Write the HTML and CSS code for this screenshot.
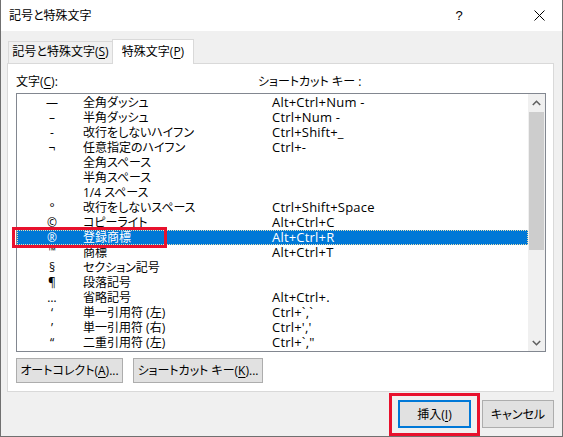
FILE: index.html
```html
<!DOCTYPE html>
<html lang="ja">
<head>
<meta charset="utf-8">
<title>記号と特殊文字</title>
<link rel="stylesheet" href="styles.css">
</head>
<body>
<div class="window">
  <div class="titlebar">
    <span class="title">記号と特殊文字</span>
    <span class="help">?</span>
    <span class="close">
      <svg width="11" height="11" viewBox="0 0 11 11"><path d="M0.5 0.5 L10.5 10.5 M10.5 0.5 L0.5 10.5" stroke="#000" stroke-width="1" fill="none"/></svg>
    </span>
  </div>
  <div class="content">
    <div class="tabs">
      <div class="tab">記号と特殊文字(<u>S</u>)</div>
      <div class="tab active">特殊文字(<u>P</u>)</div>
    </div>
    <div class="panel">
      <div class="labels">
        <span>文字(<u>C</u>):</span>
        <span>ショートカット キー :</span>
      </div>
      <div class="list">
        <div class="rows">
          <div class="row"><span class="sym">—</span><span class="name">全角ダッシュ</span><span class="key">Alt+Ctrl+Num -</span></div>
          <div class="row"><span class="sym">–</span><span class="name">半角ダッシュ</span><span class="key">Ctrl+Num -</span></div>
          <div class="row"><span class="sym">-</span><span class="name">改行をしないハイフン</span><span class="key">Ctrl+Shift+_</span></div>
          <div class="row"><span class="sym">¬</span><span class="name">任意指定のハイフン</span><span class="key">Ctrl+-</span></div>
          <div class="row"><span class="sym"></span><span class="name">全角スペース</span><span class="key"></span></div>
          <div class="row"><span class="sym"></span><span class="name">半角スペース</span><span class="key"></span></div>
          <div class="row"><span class="sym"></span><span class="name">1/4 スペース</span><span class="key"></span></div>
          <div class="row"><span class="sym">°</span><span class="name">改行をしないスペース</span><span class="key">Ctrl+Shift+Space</span></div>
          <div class="row"><span class="sym">©</span><span class="name">コピーライト</span><span class="key">Alt+Ctrl+C</span></div>
          <div class="row selected"><span class="sym">®</span><span class="name">登録商標</span><span class="key">Alt+Ctrl+R</span><span class="mark mark-row"></span></div>
          <div class="row"><span class="sym tm">™</span><span class="name">商標</span><span class="key">Alt+Ctrl+T</span></div>
          <div class="row"><span class="sym">§</span><span class="name">セクション記号</span><span class="key"></span></div>
          <div class="row"><span class="sym">¶</span><span class="name">段落記号</span><span class="key"></span></div>
          <div class="row"><span class="sym">…</span><span class="name">省略記号</span><span class="key">Alt+Ctrl+.</span></div>
          <div class="row"><span class="sym">‘</span><span class="name">単一引用符 (左)</span><span class="key">Ctrl+`,`</span></div>
          <div class="row"><span class="sym">’</span><span class="name">単一引用符 (右)</span><span class="key">Ctrl+',&#39;</span></div>
          <div class="row"><span class="sym">“</span><span class="name">二重引用符 (左)</span><span class="key">Ctrl+`,"</span></div>
        </div>
        <div class="scrollbar">
          <div class="arrow">
            <svg width="9" height="6" viewBox="0 0 9 6"><path d="M0.8 5 L4.5 1.3 L8.2 5" stroke="#606060" stroke-width="1.6" fill="none"/></svg>
          </div>
          <div class="track"><div class="thumb"></div></div>
          <div class="arrow">
            <svg width="9" height="6" viewBox="0 0 9 6"><path d="M0.8 1 L4.5 4.7 L8.2 1" stroke="#606060" stroke-width="1.6" fill="none"/></svg>
          </div>
        </div>
      </div>
      <div class="actions">
        <button class="btn btn-auto">オートコレクト(<u>A</u>)...</button>
        <button class="btn btn-key">ショートカット キー(<u>K</u>)...</button>
      </div>
    </div>
    <div class="footer">
      <button class="btn btn-insert">挿入(<u>I</u>)<span class="mark mark-btn"></span></button>
      <button class="btn btn-cancel">キャンセル</button>
    </div>
  </div>
</div>
</body>
</html>
```
FILE: styles.css
```css
* { box-sizing: border-box; }
html, body { margin: 0; padding: 0; }
body {
  width: 563px;
  height: 437px;
  overflow: hidden;
  font-family: "Open Sans", "Noto Sans CJK JP", sans-serif;
  font-size: 12px;
  font-feature-settings: "palt";
  color: #000;
  background: #fff;
}
u { text-decoration: underline; text-underline-offset: 2px; }

.window {
  width: 563px;
  height: 437px;
  border: 1px solid #707070;
  border-top: none;
  background: #f0f0f0;
  display: flex;
  flex-direction: column;
}

.titlebar {
  height: 31px;
  flex: none;
  background: #fff;
  display: flex;
  align-items: center;
}
.title { flex: 1; padding-left: 8px; line-height: 15px; }
.help {
  width: 46px;
  text-align: center;
  font-family: "Liberation Sans", sans-serif;
  font-size: 13px;
  margin-right: 34px;
}
.close {
  width: 46px;
  height: 31px;
  display: flex;
  align-items: center;
  justify-content: center;
}
.close svg { display: block; }

.content {
  flex: 1;
  padding: 8px 8px 0 6px;
  display: flex;
  flex-direction: column;
}

.tabs {
  height: 24px;
  display: flex;
  align-items: flex-end;
  padding-left: 1px;
  position: relative;
  z-index: 2;
}
.tab {
  height: 22px;
  width: 105px;
  border: 1px solid #d9d9d9;
  border-bottom: none;
  background: #f0f0f0;
  line-height: 20px;
  text-align: center;
}
.tab.active {
  width: 82px;
  height: 25px;
  margin-left: -1px;
  margin-bottom: -1px;
  background: #fff;
  line-height: 24px;
  padding-bottom: 2px;
}

.panel {
  width: 547px;
  height: 329px;
  flex: none;
  background: #fff;
  border: 1px solid #d9d9d9;
  padding: 10px 0 0 8px;
}

.labels {
  display: grid;
  grid-template-columns: 242px 1fr;
  line-height: 15px;
  height: 15px;
}

.list {
  margin-top: 4px;
  width: 530px;
  height: 259px;
  border: 1px solid #828790;
  background: #fff;
  display: flex;
}
.rows { flex: 1; padding-top: 1px; }
.row {
  height: 15px;
  line-height: 15px;
  display: grid;
  grid-template-columns: 66px 189px 1fr;
  white-space: nowrap;
  position: relative;
}
.sym { padding-left: 4px; text-align: center; }
.sym.tm { font-size: 10px; line-height: 11px; }
.key { font-size: 13px; letter-spacing: 0.2px; }
.row.selected {
  background: #0078d7;
  color: #fff;
  outline: 1px dotted #e8e0b0;
  outline-offset: -1px;
}

.mark {
  position: absolute;
  border: 3px solid #e8112d;
  z-index: 5;
  pointer-events: none;
}
.mark-row { left: -5px; top: -3px; width: 155px; height: 21px; }
.mark-btn { left: -11px; top: -9px; width: 91px; height: 43px; }

.scrollbar {
  width: 17px;
  flex: none;
  background: #f0f0f0;
  display: flex;
  flex-direction: column;
}
.arrow {
  height: 17px;
  display: flex;
  align-items: center;
  justify-content: center;
}
.arrow svg { display: block; }
.track { flex: 1; padding: 1px 1px 0; }
.thumb { height: 138px; background: #cdcdcd; }

.actions {
  margin-top: 6px;
  display: flex;
  gap: 10px;
}
.btn {
  font: inherit;
  font-feature-settings: "palt";
  color: #000;
  background: #e1e1e1;
  border: 1px solid #adadad;
  padding: 0;
  margin: 0;
  line-height: 15px;
  white-space: nowrap;
}
.btn-auto { width: 107px; height: 25px; }
.btn-key { width: 130px; height: 25px; }

.footer {
  display: flex;
  justify-content: flex-end;
  gap: 11px;
  padding-top: 8px;
}
.btn-insert {
  width: 73px;
  height: 28px;
  border: 2px solid #0078d7;
  position: relative;
}
.btn-cancel { width: 72px; height: 28px; }
```
